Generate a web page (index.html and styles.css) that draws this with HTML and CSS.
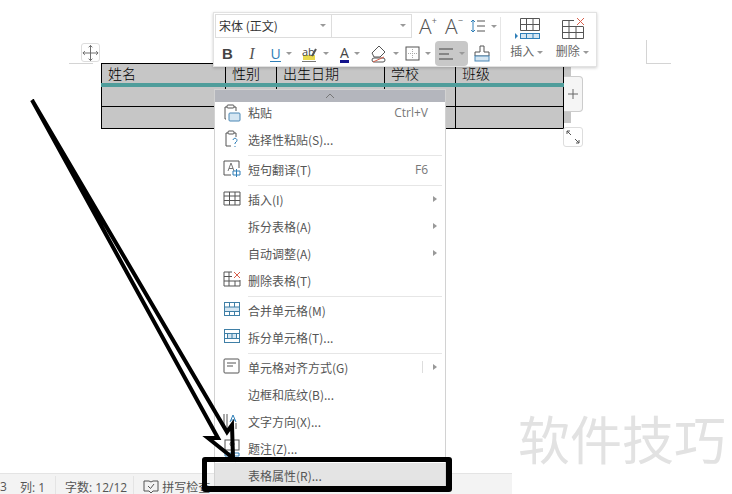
FILE: index.html
```html
<!DOCTYPE html>
<html lang="en">
<head>
    <meta charset="UTF-8">
    <title>表格属性</title>
    <link rel="stylesheet" href="styles.css">
</head>
<body>

<div id="page">
    <div class="doc">
        <table class="sheet">
            <colgroup><col class="c1"><col class="c2"><col class="c3"><col class="c4"><col class="c5"></colgroup>
            <tr class="head"><td>姓名</td><td>性别</td><td>出生日期</td><td>学校</td><td>班级</td></tr>
            <tr class="mid"><td></td><td></td><td></td><td></td><td></td></tr>
            <tr><td></td><td></td><td></td><td></td><td></td></tr>
        </table>
    </div>
    <div class="status">
        <span class="st-a">3</span><span class="st-b">列: 1</span><i></i>
        <span class="st-c">字数: 12/12</span><i></i>
        <svg class="st-icon" width="16" height="14" viewBox="0 0 16 14"><path d="M1 1h5l2 1 2-1h5v10h-5l-2 2-2-2H1z" fill="none" stroke="#555"/><path d="M5 6l2.500 2.500L11 4" fill="none" stroke="#555"/></svg>
        <span>拼写检查</span>
    </div>
</div>

<!-- table handles -->
<div class="crop crop-l"></div>
<div class="crop crop-r"></div>
<div class="move">
    <svg width="18" height="18" viewBox="0 0 18 18" fill="none" stroke="#666"><path d="M9 1v16M1 9h16M7 3l2-2 2 2M7 15l2 2 2-2M3 7L1 9l2 2M15 7l2 2-2 2"/></svg>
</div>
<div class="overflow"></div>
<div class="plus">
    <svg width="12" height="12" viewBox="0 0 12 12" stroke="#666"><path d="M6 1v10M1 6h10"/></svg>
</div>
<div class="resize">
    <svg width="16" height="16" viewBox="0 0 16 16" fill="none" stroke="#555"><path d="M2 2l4 4M2 2h3M2 2v3M14 14l-4-4M14 14h-3M14 14v-3"/></svg>
</div>

<!-- floating toolbar -->
<div class="toolbar">
    <div class="tb-left">
        <div class="tb-row">
            <div class="select font"><span>宋体 (正文)</span><b></b></div>
            <div class="select size"><b></b></div>
            <div class="tool t-grow"><span class="big">A</span><sup>+</sup></div>
            <div class="tool t-shrink"><span class="big">A</span><sup>−</sup></div>
            <div class="tool t-line">
                <svg width="16" height="16" viewBox="0 0 16 16" fill="none"><path d="M3 2v12M1 4l2-2 2 2M1 12l2 2 2-2" stroke="#2f7fb8"/><path d="M7 3h8M7 8h8M7 13h8" stroke="#555"/></svg>
                <b></b>
            </div>
        </div>
        <div class="tb-row">
            <div class="tool w25"><strong class="bold">B</strong></div>
            <div class="tool w24"><em class="ital">I</em></div>
            <div class="tool w34"><span class="under">U</span><b></b></div>
            <div class="tool w35">
                <svg width="16" height="17" viewBox="0 0 16 17"><rect x="1" y="10" width="12" height="5" fill="#e8d84c"/><text x="0" y="11" class="svg-t">ab</text><path d="M14 4l-4 7" stroke="#555" stroke-width="2"/><path d="M0 16.500h14" stroke="#777"/></svg>
                <b></b>
            </div>
            <div class="tool w34"><span class="color-a">A</span><b></b></div>
            <div class="tool w34">
                <svg width="18" height="18" viewBox="0 0 18 18" fill="none" stroke="#555"><path d="M9 1l6 6-5 5H4L2 8z"/><rect x="2" y="13" width="13" height="4" rx="2"/><path d="M3 17L14 12" stroke="#d9604c"/></svg>
                <b></b>
            </div>
            <div class="tool w34">
                <svg width="15" height="15" viewBox="0 0 15 15" fill="none" stroke="#555"><rect x="1" y="1" width="13" height="13"/><path d="M7.500 3v9M3 7.500h9" stroke="#aaa" stroke-dasharray="1 1"/></svg>
                <b></b>
            </div>
            <div class="tool w33 on">
                <svg width="16" height="14" viewBox="0 0 16 14" stroke="#444"><path d="M1 2h14M1 7h10M1 12h14"/></svg>
                <b></b>
            </div>
            <div class="tool w27">
                <svg width="16" height="17" viewBox="0 0 16 17" fill="none" stroke="#555"><path d="M6 1h4v6h5v4H1V7h5z"/><rect x="1" y="11" width="14" height="5" fill="#d5e6f2" stroke="#4a87b5"/></svg>
            </div>
        </div>
    </div>
    <div class="tb-sep"></div>
    <div class="tb-big tb-insert">
        <svg width="26" height="22" viewBox="0 0 26 22" fill="none"><path d="M6.500 1.500h19v12h-19zM12.500 1.500v12M19 1.500v12M6.500 7.500h19" stroke="#555"/><rect x="6.500" y="16.500" width="19" height="5" fill="#d5e6f2" stroke="#2f7fb8"/><path d="M12.500 16.500v5M19 16.500v5" stroke="#2f7fb8"/><path d="M1 16l3 3-3 3z" fill="#2f7fb8"/></svg>
        <div class="tb-label"><span>插入</span><b></b></div>
    </div>
    <div class="tb-big">
        <svg width="26" height="22" viewBox="0 0 26 22" fill="none"><path d="M15 3.500H3.500v18h21V10M3.500 9.500h21M3.500 15.500h21M10 3.500v18M17 9.500v12" stroke="#555"/><path d="M18 1l7 7M25 1l-7 7" stroke="#d9604c"/></svg>
        <div class="tb-label"><span>删除</span><b></b></div>
    </div>
</div>

<!-- context menu -->
<div class="menu">
    <div class="menu-up"><svg width="10" height="6" viewBox="0 0 10 6" fill="none" stroke="#777"><path d="M1 5l4-4 4 4"/></svg></div>
    <div class="item first">
        <svg class="ico" width="18" height="18" viewBox="0 0 18 18" fill="none" stroke="#555"><path d="M3 15H2V3h2M11 3h2v4"/><rect x="4" y="1" width="7" height="3" rx="1"/><rect x="6" y="9" width="11" height="8" rx="1" fill="#d5e6f2" stroke="#4a87b5"/></svg>
        <span>粘贴</span><em>Ctrl+V</em>
    </div>
    <div class="item">
        <svg class="ico" width="18" height="18" viewBox="0 0 18 18" fill="none" stroke="#555"><path d="M8 16H3V3h2M11 3h2v4"/><rect x="5" y="1" width="6" height="3" rx="1"/><path d="M10 10a2 2 0 1 1 3 2l-1 1v1M12 16v1" stroke="#2f7fb8"/></svg>
        <span>选择性粘贴(S)...</span>
    </div>
    <div class="sep"></div>
    <div class="item">
        <svg class="ico" width="18" height="18" viewBox="0 0 18 18" fill="none" stroke="#555"><path d="M8 15H1V1h15v7"/><path d="M5 11l3-8 3 8M6 8.500h4" stroke="#777"/><path d="M10 11h7v4h-7zM13.500 9v8" stroke="#2f7fb8"/></svg>
        <span>短句翻译(T)</span><em>F6</em>
    </div>
    <div class="sep"></div>
    <div class="item">
        <svg class="ico" width="18" height="16" viewBox="0 0 18 16" fill="none" stroke="#555"><path d="M1 2h16v13H1zM1 6h16M1 10.500h16M6.500 2v13M12 2v13"/></svg>
        <span>插入(I)</span><u></u>
    </div>
    <div class="item"><span>拆分表格(A)</span><u></u></div>
    <div class="item"><span>自动调整(A)</span><u></u></div>
    <div class="item">
        <svg class="ico" width="18" height="16" viewBox="0 0 18 16" fill="none" stroke="#555"><path d="M9 1H1v14h16V9M1 5.500h8M1 10h16M6 1v14M12 10v5"/><path d="M11 1l6 6M17 1l-6 6" stroke="#d9604c"/></svg>
        <span>删除表格(T)</span>
    </div>
    <div class="sep"></div>
    <div class="item">
        <svg class="ico" width="18" height="16" viewBox="0 0 18 16" fill="none" stroke="#3f7fa6"><rect x="1.500" y="1.500" width="15" height="13" /><rect x="1.500" y="6" width="15" height="4.500" fill="#d5e6f2"/><path d="M6.500 1.500V6M11.500 1.500V6M6.500 10.500v4M11.500 10.500v4"/></svg>
        <span>合并单元格(M)</span>
    </div>
    <div class="item">
        <svg class="ico" width="18" height="16" viewBox="0 0 18 16" fill="none" stroke="#3f7fa6"><rect x="1.500" y="1.500" width="15" height="13"/><rect x="4.500" y="5.500" width="9" height="5" fill="#d5e6f2"/><path d="M1.500 5.500h15M1.500 10.500h15M9 5.500v5"/></svg>
        <span>拆分单元格(T)...</span>
    </div>
    <div class="sep"></div>
    <div class="item">
        <svg class="ico" width="18" height="16" viewBox="0 0 18 16" fill="none" stroke="#555"><rect x="1" y="1" width="15" height="14" rx="1"/><path d="M4 5h9M4 8h6"/></svg>
        <span>单元格对齐方式(G)</span><s></s><u></u>
    </div>
    <div class="item"><span>边框和底纹(B)...</span></div>
    <div class="item">
        <svg class="ico" width="18" height="18" viewBox="0 0 18 18" fill="none"><path d="M1 2v15M4 2v15M13 11v6" stroke="#555"/><path d="M7 10l3-7 3 7M8 8h4" stroke="#2f7fb8"/></svg>
        <span>文字方向(X)...</span>
    </div>
    <div class="item">
        <svg class="ico" width="18" height="18" viewBox="0 0 18 18" fill="none" stroke="#555"><rect x="2" y="1" width="14" height="10"/><circle cx="9" cy="5" r="2"/><path d="M2 14h14v3H2z" stroke="#2f7fb8"/></svg>
        <span>题注(Z)...</span>
    </div>
    <div class="item active"><span>表格属性(R)...</span></div>
</div>

<!-- annotation drawn on the screenshot -->
<div class="mark"></div>
<svg class="arrow" width="732" height="494" viewBox="0 0 732 494" fill="none" stroke="#000" stroke-width="4" stroke-linejoin="miter">
    <path d="M32 100L218 438 208 438 233 458 232 425 227 432 32 100"/>
</svg>
<div class="wm">软件技巧</div>

</body>
</html>
```

FILE: styles.css
```css
body {
    margin: 0;
    background: #fff;
    font-family: "Open Sans", "Noto Sans CJK SC", sans-serif;
    font-size: 12px;
    color: #555;
    overflow: hidden;
}
#page {
    width: 732px;
    height: 494px;
    display: flex;
    flex-direction: column;
}
.doc {
    flex: 1;
    padding: 63px 0 0 101px;
}

/* table */
.sheet {
    border-collapse: collapse;
    table-layout: fixed;
    width: 462px;
    background: #c6c6c6;
    font-family: "Noto Sans CJK SC", sans-serif;
    font-size: 14px;
    font-weight: 300;
    color: #000;
}
.sheet td {
    border: 1px solid #000;
    height: 21px;
    padding: 0 6px;
    line-height: 18px;
}
.sheet .head td {
    height: 19px;
    border-bottom: 4px solid #4f9d9b;
    vertical-align: top;
}
.sheet .mid td { height: 19px; }
.c1 { width: 124px; }
.c2 { width: 51px; }
.c3 { width: 108px; }
.c4 { width: 71px; }
.c5 { width: 108px; }

/* status bar */
.status {
    width: 512px;
    height: 21px;
    box-sizing: border-box;
    border-top: 1px solid #e4e4e4;
    background: #f3f3f3;
    display: flex;
    align-items: center;
    padding-top: 5px;
    color: #555;
    white-space: nowrap;
}
.status i {
    width: 1px;
    height: 21px;
    background: #e4e4e4;
    margin: 0 9px 0 10px;
}
.status i:nth-of-type(2) { margin: 0 9px 0 6px; }
.st-b { margin-left: 13px; }
.st-icon { margin-right: 3px; }

/* handles */
.crop { position: absolute; }
.crop-l {
    left: 69px;
    top: 63px;
    width: 24px;
    border-top: 1px solid #d4d4d4;
}
.crop-r {
    left: 646px;
    top: 40px;
    width: 24px;
    height: 23px;
    border-left: 1px solid #d4d4d4;
    border-bottom: 1px solid #d4d4d4;
}
.move {
    position: absolute;
    left: 81px;
    top: 43px;
    width: 19px;
    height: 19px;
    box-sizing: border-box;
    border: 1px solid #ddd;
    border-radius: 3px;
    background: #fff;
    display: flex;
    align-items: center;
    justify-content: center;
}
.overflow {
    position: absolute;
    left: 564px;
    top: 63px;
    width: 7px;
    height: 60px;
    background: #c6c6c6;
}
.plus {
    position: absolute;
    left: 564px;
    top: 76px;
    width: 19px;
    height: 36px;
    box-sizing: border-box;
    border: 1px solid #ccc;
    border-left: 0;
    border-radius: 0 4px 4px 0;
    background: #f5f5f5;
    display: flex;
    align-items: center;
    justify-content: center;
}
.resize {
    position: absolute;
    left: 563px;
    top: 127px;
    width: 20px;
    height: 20px;
    box-sizing: border-box;
    border: 1px solid #ddd;
    border-radius: 3px;
    background: #fff;
    display: flex;
    align-items: center;
    justify-content: center;
}

/* toolbar */
.toolbar {
    position: absolute;
    left: 213px;
    top: 12px;
    width: 384px;
    height: 55px;
    box-sizing: border-box;
    padding: 1px 0 0 1px;
    background: #fff;
    border: 1px solid #e2e2e2;
    box-shadow: 0 1px 3px rgba(0, 0, 0, 0.2);
    display: flex;
}
.tb-left { width: 285px; }
.tb-row {
    display: flex;
    align-items: center;
}
.tb-row:first-child { height: 24px; }
.tb-row:last-child {
    height: 25px;
    margin-top: 3px;
}
.tb-row b, .tb-label b, .select b {
    width: 0;
    height: 0;
    border: 3px solid transparent;
    border-top: 3px solid #999;
    border-bottom: 0;
    margin-left: 5px;
}
.select {
    height: 24px;
    box-sizing: border-box;
    border: 1px solid #ddd;
    display: flex;
    align-items: center;
    justify-content: space-between;
    padding: 0 5px 2px 3px;
    color: #333;
    font-family: "Noto Sans CJK SC", sans-serif;
}
.font { width: 117px; }
.size {
    width: 80px;
    border-left: 0;
    justify-content: flex-end;
}
.tool {
    height: 100%;
    display: flex;
    align-items: center;
    justify-content: center;
    box-sizing: border-box;
}
.big {
    font-size: 21px;
    font-weight: 300;
    line-height: 22px;
}
.tool sup {
    font-size: 9px;
    line-height: 1;
    align-self: flex-start;
    margin-top: 2px;
    color: #666;
}
.t-grow { width: 29px; padding-left: 3px; }
.t-shrink { width: 26px; }
.t-line { width: 33px; }
.w25 { width: 25px; }
.w24 { width: 24px; }
.w34 { width: 34px; }
.w35 { width: 35px; }
.w33 { width: 33px; }
.w27 { width: 27px; }
.on {
    background: #c8c8c8;
    border-radius: 4px;
}
.bold {
    font-family: "Liberation Sans", sans-serif;
    font-size: 15px;
    color: #444;
}
.ital {
    font-family: "Liberation Serif", serif;
    font-size: 16px;
    color: #555;
}
.under {
    font-size: 14px;
    color: #2f7fb8;
    border-bottom: 1px solid #2f7fb8;
    line-height: 15px;
}
.color-a {
    font-size: 14px;
    line-height: 15px;
    color: #444;
    border-bottom: 3px solid #14148c;
}
.svg-t {
    font-family: "Open Sans", sans-serif;
    font-size: 11px;
    fill: #444;
}
.tb-sep {
    width: 1px;
    height: 44px;
    margin: 3px 0 0 0;
    background: #e6e6e6;
}
.tb-big {
    width: 48px;
    box-sizing: border-box;
    display: flex;
    flex-direction: column;
    align-items: center;
    padding-top: 3px;
}
.tb-insert { padding-left: 4px; }
.tb-label {
    display: flex;
    align-items: center;
    font-size: 12px;
    color: #666;
    margin-top: 5px;
    line-height: 16px;
}
.tb-label b { margin-left: 3px; }

/* context menu */
.menu {
    position: absolute;
    left: 214px;
    top: 89px;
    width: 232px;
    height: 401px;
    box-sizing: border-box;
    border: 1px solid #d2d2d2;
    background: #fff;
}
.menu-up {
    height: 12px;
    background: #b4b6bd;
    display: flex;
    align-items: center;
    justify-content: center;
}
.item {
    position: relative;
    height: 27px;
    display: flex;
    align-items: center;
    box-sizing: border-box;
    padding: 0 0 3px 33px;
    font-family: "Noto Sans CJK SC", sans-serif;
    white-space: nowrap;
}
.first {
    height: 25px;
    padding-bottom: 4px;
}
.ico {
    position: absolute;
    left: 8px;
    top: 3px;
}
.first .ico { top: 2px; }
.item em {
    position: absolute;
    right: 17px;
    font-style: normal;
    font-family: "Open Sans", sans-serif;
    color: #777;
}
.item u {
    position: absolute;
    right: 8px;
    width: 0;
    height: 0;
    border: 3px solid transparent;
    border-left: 4px solid #999;
    border-right: 0;
}
.item s {
    position: absolute;
    right: 22px;
    width: 1px;
    height: 12px;
    background: #ddd;
}
.sep {
    height: 1px;
    margin: 1px 3px 1px 33px;
    background: #e6e6e6;
}
.active { background: #e4e4e4; }

/* annotation */
.mark {
    position: absolute;
    left: 202px;
    top: 457px;
    width: 250px;
    height: 35px;
    box-sizing: border-box;
    border: 5px solid #000;
    border-width: 5px 6px 6px 5px;
    border-radius: 3px;
}
.arrow {
    position: absolute;
    left: 0;
    top: 0;
}
.wm {
    position: absolute;
    left: 518px;
    top: 400px;
    font-family: "Noto Sans CJK SC", sans-serif;
    font-size: 52px;
    line-height: 76px;
    color: #e2e2e2;
    white-space: nowrap;
}
```
